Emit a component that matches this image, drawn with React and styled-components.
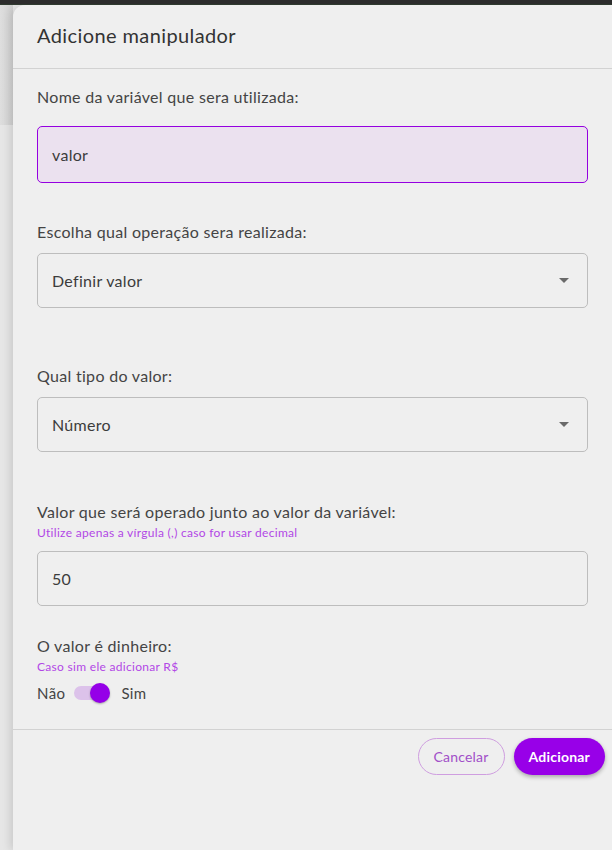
import React from "react";
import styled, { createGlobalStyle } from "styled-components";

const GlobalStyle = createGlobalStyle`
  html, body {
    margin: 0;
    padding: 0;
    background: #e9e9e9;
    font-family: "Lato", "Noto Sans", sans-serif;
  }
  * {
    box-sizing: border-box;
  }
`;

function ChevronDown() {
  return (
    <svg width="10" height="5" viewBox="0 0 10 5">
      <path d="M0 0 L10 0 L5 5 Z" fill="#6a6a6a" />
    </svg>
  );
}

function Field({ label, helper, value, active, select, top, gap }) {
  return (
    <Section $top={top}>
      <Label>{label}</Label>
      {helper && <Helper>{helper}</Helper>}
      <InputBox $active={active} $gap={gap}>
        <span>{value}</span>
        {select && <ChevronDown />}
      </InputBox>
    </Section>
  );
}

export default function App() {
  return (
    <>
      <GlobalStyle />
      <TopBar />
      <Screen>
        <Backdrop>
          <BackdropCard />
        </Backdrop>
        <Dialog>
          <Header>Adicione manipulador</Header>
          <Body>
            <Field
              top={18}
              gap={19}
              label="Nome da variável que sera utilizada:"
              value="valor"
              active
            />
            <Field
              top={39}
              gap={11}
              label="Escolha qual operação sera realizada:"
              value="Definir valor"
              select
            />
            <Field
              top={58}
              gap={11}
              label="Qual tipo do valor:"
              value="Número"
              select
            />
            <Field
              top={50}
              gap={11}
              label="Valor que será operado junto ao valor da variável:"
              helper="Utilize apenas a vírgula (,) caso for usar decimal"
              value="50"
            />
            <Section $top={30}>
              <Label>O valor é dinheiro:</Label>
              <Helper>Caso sim ele adicionar R$</Helper>
              <SwitchRow>
                <span>Não</span>
                <Track>
                  <Thumb />
                </Track>
                <span>Sim</span>
              </SwitchRow>
            </Section>
          </Body>
          <Footer>
            <OutlineButton>Cancelar</OutlineButton>
            <FilledButton>Adicionar</FilledButton>
          </Footer>
        </Dialog>
      </Screen>
    </>
  );
}

const TopBar = styled.div`
  height: 5px;
  background: #2c2c2c;
  border-bottom: 1px solid #2f3a2f;
`;

const Screen = styled.div`
  display: flex;
  height: 845px;
  overflow: hidden;
`;

const Backdrop = styled.div`
  width: 13px;
  flex-shrink: 0;
  background: #e6e6e6;
`;

const BackdropCard = styled.div`
  height: 120px;
  background: linear-gradient(to right, #dedede, #d2d2d2);
`;

const Dialog = styled.div`
  flex: 1;
  display: flex;
  flex-direction: column;
  background: #efefef;
  border-top-left-radius: 12px;
  box-shadow: -3px 0 8px rgba(0, 0, 0, 0.12);
  color: #444;
`;

const Header = styled.div`
  height: 64px;
  padding: 18px 24px 0;
  font-size: 20px;
  letter-spacing: 0.4px;
  color: #333;
  border-bottom: 1px solid #d2d2d2;
`;

const Body = styled.div`
  padding: 0 24px;
  height: 661px;
  border-bottom: 1px solid #d2d2d2;
`;

const Section = styled.div`
  display: flex;
  flex-direction: column;
  margin-top: ${(p) => p.$top}px;
`;

const Label = styled.div`
  font-size: 16px;
  line-height: 20px;
  letter-spacing: 0.3px;
  color: #444;
`;

const Helper = styled.div`
  font-size: 12px;
  line-height: 14px;
  letter-spacing: 0.3px;
  margin-top: 4px;
  color: #b247e6;
`;

const InputBox = styled.div`
  margin-top: ${(p) => p.$gap}px;
  height: ${(p) => (p.$active ? 57 : 55)}px;
  width: 551px;
  display: flex;
  align-items: center;
  justify-content: space-between;
  padding: 0 18px 0 14px;
  font-size: 16px;
  letter-spacing: 0.3px;
  color: #3c3c3c;
  border-radius: 5px;
  border: 1px solid ${(p) => (p.$active ? "#9500e0" : "#bdbdbd")};
  background: ${(p) => (p.$active ? "#ebe1ef" : "#efefef")};
`;

const SwitchRow = styled.div`
  display: flex;
  align-items: center;
  gap: 9px;
  margin-top: 10px;
  font-size: 15px;
  letter-spacing: 0.4px;
  color: #444;
`;

const Track = styled.div`
  position: relative;
  width: 33px;
  height: 14px;
  border-radius: 7px;
  background: #dcc2ea;
  margin-right: 5px;
`;

const Thumb = styled.div`
  position: absolute;
  right: -3px;
  top: -3px;
  width: 20px;
  height: 20px;
  border-radius: 50%;
  background: #9500e8;
  box-shadow: 0 1px 2px rgba(0, 0, 0, 0.3);
`;

const Footer = styled.div`
  display: flex;
  justify-content: flex-end;
  gap: 9px;
  padding: 8px 7px 0 0;
`;

const ButtonBase = styled.button`
  height: 37px;
  border-radius: 19px;
  font-family: "Lato", "Noto Sans", sans-serif;
  font-size: 14px;
  letter-spacing: 0.2px;
  cursor: pointer;
`;

const OutlineButton = styled(ButtonBase)`
  padding: 0 15px;
  background: transparent;
  border: 1px solid #cf9ee0;
  color: #a14fc8;
`;

const FilledButton = styled(ButtonBase)`
  padding: 0 15px;
  background: #9800e8;
  border: none;
  color: #fff;
  font-weight: 700;
  box-shadow: 0 2px 4px rgba(0, 0, 0, 0.3);
`;
